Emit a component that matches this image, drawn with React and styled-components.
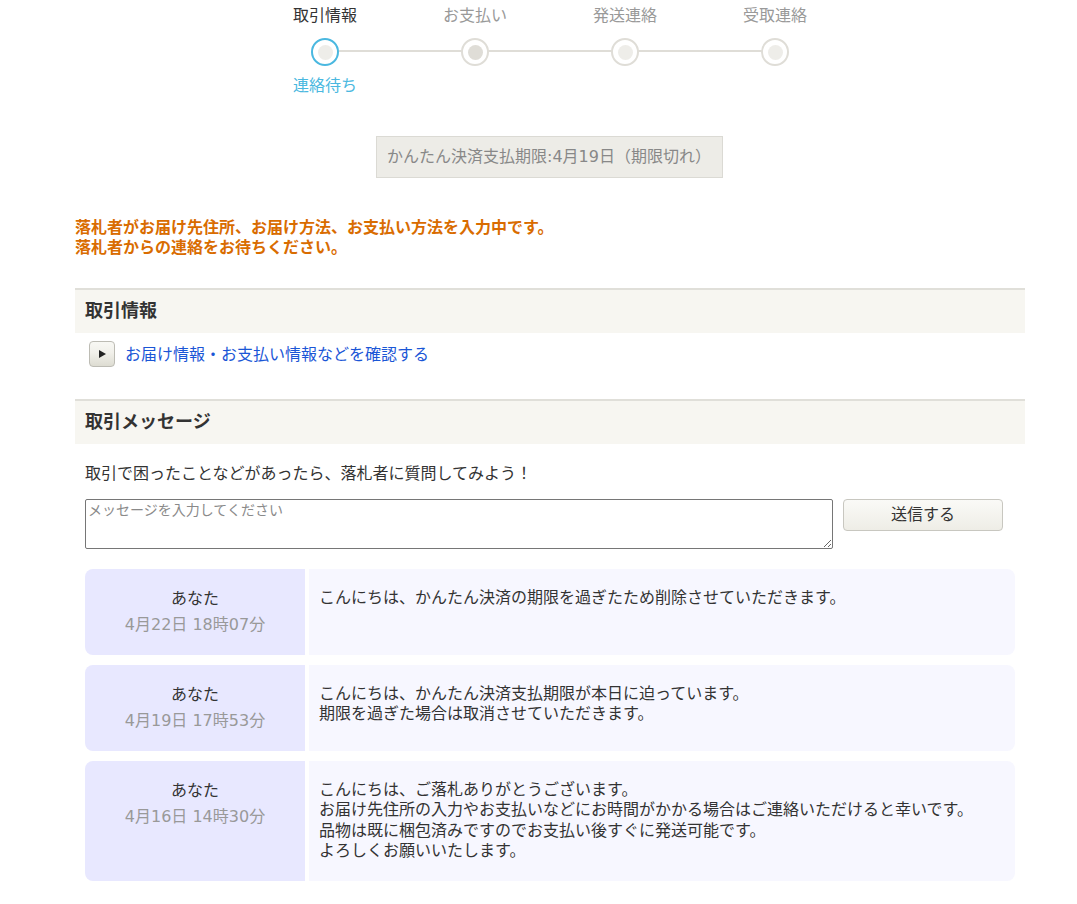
import * as React from 'react'
import styled, { createGlobalStyle } from 'styled-components'

const GlobalStyle = createGlobalStyle`
  html, body {
    margin: 0;
    padding: 0;
    background: #fff;
  }
  body {
    font-family: "DejaVu Sans", "Noto Sans CJK JP", sans-serif;
    font-size: 16px;
    line-height: 20px;
    color: #333;
  }
`

const Page = styled.div`
  width: 950px;
  height: 904px;
  margin-left: 75px;
  overflow: hidden;
`

const Steps = styled.ol`
  display: flex;
  justify-content: center;
  list-style: none;
  margin: 0;
  padding: 6px 0 0;
  height: 136px;
  box-sizing: border-box;
`

const Step = styled.li`
  position: relative;
  width: 150px;
  display: flex;
  flex-direction: column;
  align-items: center;
  color: ${p => (p.$current ? '#333' : '#999')};
  &:not(:last-child)::after {
    content: '';
    position: absolute;
    top: 44px;
    left: 75px;
    width: 150px;
    height: 2px;
    background: #dfddd7;
  }
`

const Dot = styled.span`
  position: relative;
  z-index: 1;
  box-sizing: border-box;
  width: 28px;
  height: 28px;
  margin: 12px 0 0;
  border-radius: 50%;
  background: #fff;
  border: 2px solid ${p => (p.$current ? '#4ab8e0' : '#dfddd7')};
  display: flex;
  align-items: center;
  justify-content: center;
  &::before {
    content: '';
    width: 15px;
    height: 15px;
    border-radius: 50%;
    background: ${p => (p.$dark ? '#dfddd7' : '#eeede9')};
  }
`

const StepStatus = styled.span`
  margin-top: 10px;
  color: #4ab8e0;
`

const DeadlineRow = styled.div`
  display: flex;
  justify-content: center;
`

const Deadline = styled.div`
  box-sizing: border-box;
  width: 347px;
  height: 42px;
  line-height: 39px;
  padding-left: 10px;
  margin-left: -1px;
  background: #edece7;
  border: 1px solid #dbdad4;
  color: #888;
  white-space: nowrap;
`

const Notice = styled.p`
  margin: 40px 0 0;
  color: #d96c00;
  font-weight: 700;
  line-height: 20px;
`

const SectionTitle = styled.h2`
  margin: ${p => p.$top}px 0 0;
  height: 45px;
  box-sizing: border-box;
  border-top: 2px solid #e0dfd9;
  background: #f7f6f1;
  padding-left: 10px;
  font-size: 18px;
  line-height: 41px;
  font-weight: 700;
  color: #333;
`

const LinkRow = styled.div`
  display: flex;
  align-items: center;
  gap: 10px;
  height: 42px;
  padding-left: 14px;
`

const ArrowButton = styled.span`
  box-sizing: border-box;
  width: 26px;
  height: 26px;
  border: 1px solid #bdbcb4;
  border-radius: 4px;
  background: linear-gradient(#f8f8f4, #f1f0ea 45%, #dddcd2);
  display: flex;
  align-items: center;
  justify-content: center;
  &::before {
    content: '';
    margin-left: 1px;
    border-style: solid;
    border-width: 4.5px 0 4.5px 7px;
    border-color: transparent transparent transparent #222;
  }
`

const TextLink = styled.a`
  margin-top: 2px;
  color: #1a56d6;
  text-decoration: none;
  cursor: pointer;
`

const Lead = styled.p`
  margin: 20px 0 0 10px;
`

const ComposeRow = styled.form`
  display: flex;
  align-items: flex-start;
  gap: 10px;
  margin: 15px 0 0 10px;
`

const MessageInput = styled.textarea`
  box-sizing: border-box;
  width: 748px;
  height: 50px;
  margin: 0;
  padding: 1px 2px;
  border: 1px solid #767676;
  border-radius: 2px;
  background: #fff;
  font: inherit;
  font-size: 14px;
  line-height: 18px;
  &::placeholder {
    color: #8a8a8a;
    opacity: 1;
  }
`

const SendButton = styled.button`
  box-sizing: border-box;
  width: 160px;
  height: 32px;
  border: 1px solid #c8c7c0;
  border-radius: 4px;
  background: linear-gradient(#fafaf7, #eeede6);
  font: inherit;
  color: #333;
  padding: 0;
`

const Thread = styled.div`
  display: flex;
  flex-direction: column;
  gap: 10px;
  margin: 20px 10px 0;
`

const Message = styled.article`
  display: flex;
  gap: 4px;
  min-height: ${p => p.$height}px;
  border-radius: 8px;
  overflow: hidden;
`

const Sender = styled.div`
  flex: 0 0 220px;
  background: #e8e8ff;
  text-align: center;
  padding-top: 17px;
  line-height: 26px;
`

const SentAt = styled.div`
  color: #999;
`

const Body = styled.div`
  flex: 1;
  background: #f7f7ff;
  padding: 19px 10px 0;
  line-height: 20.4px;
`

const steps = [
  { label: '取引情報', current: true, status: '連絡待ち' },
  { label: 'お支払い', dark: true },
  { label: '発送連絡' },
  { label: '受取連絡' },
]

const messages = [
  {
    date: '4月22日 18時07分',
    height: 86,
    lines: ['こんにちは、かんたん決済の期限を過ぎたため削除させていただきます。'],
  },
  {
    date: '4月19日 17時53分',
    height: 86,
    lines: ['こんにちは、かんたん決済支払期限が本日に迫っています。', '期限を過ぎた場合は取消させていただきます。'],
  },
  {
    date: '4月16日 14時30分',
    height: 120,
    lines: [
      'こんにちは、ご落札ありがとうございます。',
      'お届け先住所の入力やお支払いなどにお時間がかかる場合はご連絡いただけると幸いです。',
      '品物は既に梱包済みですのでお支払い後すぐに発送可能です。',
      'よろしくお願いいたします。',
    ],
  },
]

export default function App() {
  return (
    <Page>
      <GlobalStyle />
      <Steps>
        {steps.map(s => (
          <Step key={s.label} $current={s.current}>
            {s.label}
            <Dot $current={s.current} $dark={s.dark} />
            {s.status && <StepStatus>{s.status}</StepStatus>}
          </Step>
        ))}
      </Steps>
      <DeadlineRow>
        <Deadline>かんたん決済支払期限:4月19日（期限切れ）</Deadline>
      </DeadlineRow>
      <Notice>
        落札者がお届け先住所、お届け方法、お支払い方法を入力中です。
        <br />
        落札者からの連絡をお待ちください。
      </Notice>
      <SectionTitle $top={30}>取引情報</SectionTitle>
      <LinkRow>
        <ArrowButton />
        <TextLink>お届け情報・お支払い情報などを確認する</TextLink>
      </LinkRow>
      <SectionTitle $top={24}>取引メッセージ</SectionTitle>
      <Lead>取引で困ったことなどがあったら、落札者に質問してみよう！</Lead>
      <ComposeRow onSubmit={e => e.preventDefault()}>
        <MessageInput placeholder="メッセージを入力してください" />
        <SendButton type="submit">送信する</SendButton>
      </ComposeRow>
      <Thread>
        {messages.map(m => (
          <Message key={m.date} $height={m.height}>
            <Sender>
              あなた
              <SentAt>{m.date}</SentAt>
            </Sender>
            <Body>
              {m.lines.map(line => (
                <div key={line}>{line}</div>
              ))}
            </Body>
          </Message>
        ))}
      </Thread>
    </Page>
  )
}
